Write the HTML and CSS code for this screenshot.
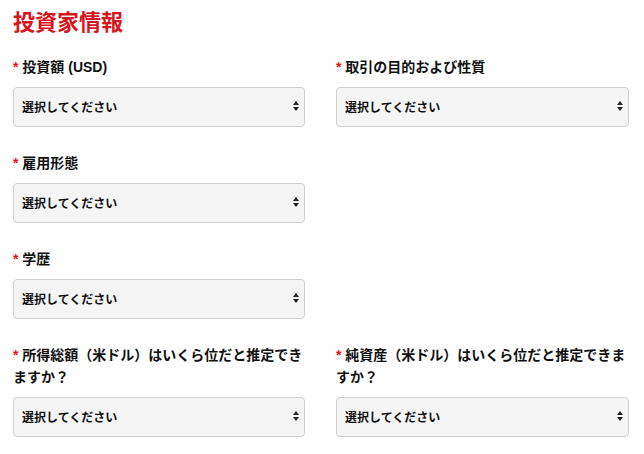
FILE: index.html
```html
<!DOCTYPE html>
<html>
  <head>
    <meta charset="utf-8">
    <title>投資家情報</title>
    <link rel="stylesheet" href="styles.css">
  </head>
  <body>
    <div class="page">
      <h2 class="title">投資家情報</h2>
      <form class="form-grid" action="">
        <div class="field col-left">
          <label class="label"><span class="req">*</span> <span>投資額 (USD)</span></label>
          <div class="select-wrap">
            <select class="select"><option>選択してください</option></select>
          </div>
        </div>
        <div class="field">
          <label class="label"><span class="req">*</span> <span>取引の目的および性質</span></label>
          <div class="select-wrap">
            <select class="select"><option>選択してください</option></select>
          </div>
        </div>
        <div class="field col-left">
          <label class="label"><span class="req">*</span> <span>雇用形態</span></label>
          <div class="select-wrap">
            <select class="select"><option>選択してください</option></select>
          </div>
        </div>
        <div class="field col-left">
          <label class="label"><span class="req">*</span> <span>学歴</span></label>
          <div class="select-wrap">
            <select class="select"><option>選択してください</option></select>
          </div>
        </div>
        <div class="field col-left">
          <label class="label"><span class="req">*</span> <span>所得総額（米ドル）はいくら位だと推定できますか？</span></label>
          <div class="select-wrap">
            <select class="select"><option>選択してください</option></select>
          </div>
        </div>
        <div class="field">
          <label class="label"><span class="req">*</span> <span>純資産（米ドル）はいくら位だと推定できますか？</span></label>
          <div class="select-wrap">
            <select class="select"><option>選択してください</option></select>
          </div>
        </div>
      </form>
    </div>
  </body>
</html>
```

FILE: styles.css
```css
body { margin: 0; background: #fff; color: #111; font-family: "Liberation Sans", "Noto Sans CJK JP", sans-serif; }

.page { padding: 0 15px 0 13px; }

.title { margin: 0; padding-top: 8px; font-size: 22px; line-height: 30px; font-weight: bold; color: #d8141c; }

.form-grid { display: grid; grid-template-columns: 292px 293px; column-gap: 31px; row-gap: 25px; margin-top: 18px; }
.col-left { grid-column: 1; }

.label { display: block; font-size: 14px; line-height: 22px; font-weight: bold; margin-bottom: 9px; }
.req { color: #e3141c; }

.select-wrap { position: relative; }
.select { display: block; width: 100%; height: 40px; margin: 0; padding: 2px 20px 0 8px; border: 1px solid #cfcfcf; border-radius: 4px; background: #f5f5f5; font-family: inherit; font-size: 12px; font-weight: bold; color: #111; -webkit-appearance: none; appearance: none; box-sizing: border-box; }

/* up/down arrows drawn over the select */
.select-wrap::before,
.select-wrap::after { content: ""; position: absolute; right: 6px; border-left: 3px solid transparent; border-right: 3px solid transparent; pointer-events: none; }
.select-wrap::before { top: 14px; border-bottom: 4px solid #222; }
.select-wrap::after { top: 20px; border-top: 4px solid #222; }
```
